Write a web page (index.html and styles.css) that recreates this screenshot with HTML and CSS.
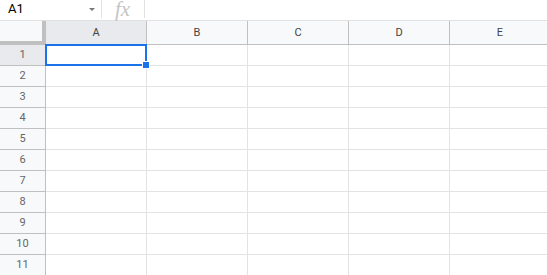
FILE: index.html
```html
<!DOCTYPE html>
<html lang="en">
<head>
  <meta charset="UTF-8">
  <title>Sheet</title>
  <link rel="stylesheet" href="styles.css">
</head>
<body>
  <div class="formula-bar">
    <div class="name-box">A1<span class="caret"></span></div>
    <div class="fx">fx</div>
    <div class="formula-input"></div>
  </div>

  <div class="sheet">
    <div class="corner"></div>
    <div class="col-head active">A</div>
    <div class="col-head">B</div>
    <div class="col-head">C</div>
    <div class="col-head">D</div>
    <div class="col-head">E</div>
  </div>
  <div class="sheet body" id="rows"></div>

  <div class="selection"><span class="handle"></span></div>

  <script>
    // build 11 rows of empty cells
    const rows = document.getElementById("rows");
    for (let r = 1; r <= 11; r++) {
      const head = document.createElement("div");
      head.className = "row-head" + (r === 1 ? " active" : "");
      head.textContent = r;
      rows.appendChild(head);
      for (let c = 0; c < 5; c++) {
        const cell = document.createElement("div");
        cell.className = "cell";
        rows.appendChild(cell);
      }
    }
  </script>
</body>
</html>
```

FILE: styles.css
```css
body {
  margin: 0;
  background: #fff;
  font-family: Roboto, "Liberation Sans", Arial, sans-serif;
  overflow: hidden;
  position: relative;
}
.formula-bar {
  display: flex;
  height: 20px;
  border-bottom: 1px solid #e1e1e1;
}
.name-box {
  width: 102px;
  box-sizing: border-box;
  padding-left: 8px;
  font-size: 13px;
  line-height: 18px;
  color: #000;
  border-right: 1px solid #e1e1e1;
  position: relative;
  height: 18px;
}
.caret {
  position: absolute;
  left: 89px;
  top: 8px;
  border-left: 3px solid transparent;
  border-right: 3px solid transparent;
  border-top: 3px solid #777;
}
.fx {
  width: 43px;
  box-sizing: border-box;
  height: 18px;
  padding-left: 13px;
  font-family: "Liberation Serif", "Times New Roman", serif;
  font-style: italic;
  font-size: 21px;
  line-height: 18px;
  color: #c5c5c5;
  border-right: 1px solid #e1e1e1;
}
.formula-input { flex: 1; }

.sheet {
  display: grid;
  grid-template-columns: 46px repeat(5, 101px);
  width: 551px;
}
.corner {
  height: 24px;
  box-sizing: border-box;
  background: #f8f9fa;
  border-right: 4px solid #c0c0c0;
  border-bottom: 4px solid #c0c0c0;
}
.col-head {
  height: 24px;
  box-sizing: border-box;
  background: #f8f9fa;
  border-right: 1px solid #c0c0c0;
  border-bottom: 1px solid #c0c0c0;
  font-size: 11px;
  color: #444;
  text-align: center;
  line-height: 23px;
}
.row-head {
  height: 21px;
  box-sizing: border-box;
  background: #f8f9fa;
  border-right: 1px solid #c0c0c0;
  border-bottom: 1px solid #c0c0c0;
  font-size: 11px;
  color: #666;
  text-align: center;
  line-height: 20px;
}
.active { background: #e8eaed; }
.cell {
  height: 21px;
  box-sizing: border-box;
  border-right: 1px solid #e2e3e3;
  border-bottom: 1px solid #e2e3e3;
}

.selection {
  position: absolute;
  left: 45px;
  top: 44px;
  width: 102px;
  height: 22px;
  box-sizing: border-box;
  border: 2px solid #1a73e8;
}
.handle {
  position: absolute;
  right: -5px;
  bottom: -5px;
  width: 6px;
  height: 6px;
  background: #1a73e8;
  border: 1px solid #fff;
}
```
